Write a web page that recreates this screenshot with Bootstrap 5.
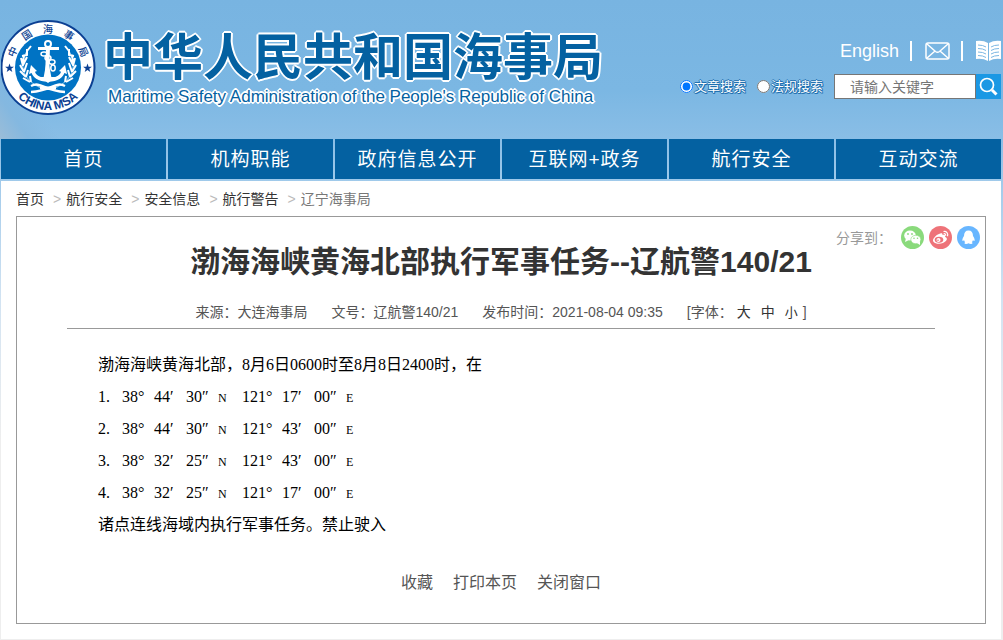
<!DOCTYPE html>
<html lang="zh-CN">
<head>
<meta charset="utf-8">
<meta name="viewport" content="width=device-width, initial-scale=1">
<title>中华人民共和国海事局</title>
<link href="https://cdn.jsdelivr.net/npm/bootstrap@5.3.0/dist/css/bootstrap.min.css" rel="stylesheet">
<style>
  body { font-family: "Liberation Sans", "Noto Sans CJK SC", sans-serif; font-size: 14px; line-height: 20px; color: #333;
    background: #eee linear-gradient(#78b4e1 0, #7bb7e3 90px, #8abee6 140px, #a5cceb 190px, #d2e3f2 300px, #eee 440px) no-repeat; }
  a { color: inherit; text-decoration: none; }
  a:hover { text-decoration: underline; }
  .masthead { min-height: 139px; padding: 20px 2px 0 1px; background: linear-gradient(55deg, #9bbdd8 0, #84b8e0 24px, transparent 50px); }
  .brand-text { margin-left: 10px; padding-top: 8px; }
  .brand-name { font-size: 50px; line-height: 60px; font-weight: 700; color: #0461a1; white-space: nowrap; margin-left: -4px;
    text-shadow: 2px 0 #fff, -2px 0 #fff, 0 2px #fff, 0 -2px #fff, 1px 1px #fff, -1px 1px #fff, 1px -1px #fff, -1px -1px #fff; }
  .brand-en { font-size: 17px; line-height: 18px; color: #0461a1; white-space: nowrap; padding-left: 1px;
    text-shadow: 1px 0 #fff, -1px 0 #fff, 0 1px #fff, 0 -1px #fff, 1px 1px #fff, -1px 1px #fff, 1px -1px #fff, -1px -1px #fff, 2px 0 #fff, -2px 0 #fff, 0 2px #fff, 0 -2px #fff; }
  .tools { gap: 11px; font-size: 18px; line-height: 22px; color: #fff; margin-top: 20px; }
  .tools svg { margin-left: 2px; }
  .rule { width: 2px; height: 20px; background: #fff; }
  .search-kind { font-size: 13px; color: #fff; text-shadow: 1px 0 #1f70b0, -1px 0 #1f70b0, 0 1px #1f70b0, 0 -1px #1f70b0, 1px 1px #1f70b0; }
  .search-kind input { width: 13px; height: 13px; margin: 0 1px 0 0; }
  .search-kind label { margin-right: 11px; }
  .search-box { width: 142px; height: 25px; border: 1px solid #767676; border-radius: 0; padding: 0 15px; font-size: 14px; background: #fff; }
  .search-box::placeholder { color: #757575; }
  .search-go { width: 25px; height: 25px; border: 0; padding: 0; background: #1b98e4; }
  .site-nav { gap: 2px; margin: 0 2px 2px 1px; }
  .site-nav a { flex: 1 1 0; background: #0461a1; color: #fff; font-size: 19px; line-height: 38px; padding-top: 2px; text-align: center; letter-spacing: 1px; }
  .page-body { margin: 0 2px 2px 1px; background: #fff; padding: 9px 15px 15px; }
  .crumbs { --bs-breadcrumb-divider: ">"; margin: 0 0 7px; line-height: 19px; }
  .crumbs .breadcrumb-item + .breadcrumb-item { padding-left: 9px; }
  .crumbs .breadcrumb-item + .breadcrumb-item::before { color: #bbb; padding-right: 5px; font-size: 14px; }
  .crumbs .active { color: #777; }
  .notice { border: 1px solid #999; min-height: 407px; }
  .share { position: absolute; top: 9px; right: 5px; gap: 5px; color: #999; }
  .notice h1 { font-size: 30px; line-height: 40px; font-weight: 700; padding-top: 25px; margin: 0; text-align: center; }
  .facts { margin: 20px 50px 0; border-bottom: 1px solid #999; padding-bottom: 5px; color: #555; gap: 24px; }
  .facts button { border: 0; background: none; padding: 0; color: #333; margin-right: 10px; font-size: 14px; }
  .facts button:last-of-type { margin-right: 5px; font-size: 13px; }
  .notice-text { margin: 20px 50px 0; padding-left: 31px; font: 16px/32px "Liberation Serif", "Noto Sans CJK SC", serif; color: #000; }
  .notice-text p { margin: 0; height: 2em; white-space: pre; }
  .notice-text i { display: inline-block; width: 16px; font-style: normal; }
  .notice-text b { display: inline-block; width: 8px; font-weight: 400; font-size: 12px; }
  .notice-text b.dot { width: 16px; font-size: 16px; }
  .actions { margin: 32px 0 30px; gap: 20px; font-size: 16px; line-height: 20px; color: #555; }
  .actions button { border: 0; background: none; padding: 0; color: inherit; }
</style>
</head>
<body>
<header class="masthead d-flex align-items-start">
  <a href="#" class="d-flex align-items-start text-decoration-none">
    <svg width="96" height="96" viewBox="0 0 96 96" role="img" aria-label="中国海事局">
      <circle cx="47" cy="47.5" r="46.5" fill="#fff" stroke="#0b3f92" stroke-width="2"/>
      <circle cx="47" cy="47.5" r="33" fill="#0073c4"/>
      <g font-family="Noto Sans CJK SC" font-size="10" font-weight="500" fill="#0b3f92" text-anchor="middle">
        <text transform="rotate(-66 47 47.5)" x="47" y="12.500">中</text>
        <text transform="rotate(-33 47 47.5)" x="47" y="12.500">国</text>
        <text x="47" y="12.500">海</text>
        <text transform="rotate(33 47 47.5)" x="47" y="12.500">事</text>
        <text transform="rotate(66 47 47.5)" x="47" y="12.500">局</text>
      </g>
      <path id="ring" d="M4.500 47.500a42.500 42.500 0 0 0 85 0" fill="none"/>
      <text font-family="Liberation Sans" font-size="12" font-weight="700" fill="#0b3f92" text-anchor="middle"><textPath href="#ring" startOffset="50%">CHINA MSA</textPath></text>
      <path id="star" fill="#0b3f92" d="M8.500 43.500l1.100 3.200h3.300l-2.600 2 1 3.200-2.800-1.900-2.800 1.900 1-3.200-2.600-2h3.300z"/>
      <use href="#star" x="78"/>
      <g fill="none" stroke="#fff">
        <circle cx="47" cy="24" r="3" stroke-width="2"/>
        <path d="M37 28.500h21" stroke-width="3"/>
        <path d="M47 27l-1 32" stroke-width="4"/>
        <path d="M45.500 42l-3 16h8l-3-16z" fill="#fff" stroke="none"/>
        <path d="M32 50c0 6 6 10 15 10s15-4 15-10" stroke-width="3.500"/>
        <path d="M28 54l2-9 6 6zM66 54l-2-9-6 6z" fill="#fff" stroke="none"/>
        <path d="M39 57l8 6 8-6z" fill="#fff" stroke="none"/>
        <g stroke-width="1.500"><ellipse cx="43" cy="34" rx="3" ry="2"/><ellipse cx="47" cy="38" rx="3" ry="2.200"/><ellipse cx="51" cy="42" rx="3" ry="2.200"/><ellipse cx="52" cy="48" rx="2.200" ry="3"/></g>
        <g id="laurel">
          <path d="M29 27c-13 15-8 33 11 41" stroke-width="1" stroke="#9dd0f0"/>
          <path d="M30 26l-4 5M26 29v6l-5 1M23 35l-1 7M20 38l2 8M26 37l-4 8M19 45l4 7M26 43l-3 9M19 51l6 6M27 50l-2 7M22 58l7 4M29 56l1 6" stroke-width="2"/>
        </g>
        <use href="#laurel" transform="matrix(-1 0 0 1 94 0)"/>
        <path d="M30 66c10-5 13 5 34 6M64 66c-10-5-13 5-34 6" stroke-width="2.500"/>
        <path d="M39 68h16" stroke-width="3"/>
      </g>
    </svg>
    <span class="brand-text d-flex flex-column">
      <span class="brand-name">中华人民共和国海事局</span>
      <span class="brand-en">Maritime Safety Administration of the People's Republic of China</span>
    </span>
  </a>
  <div class="ms-auto">
    <div class="tools d-flex align-items-center justify-content-end">
      <a href="#">English</a><span class="rule"></span>
      <a href="#" class="d-flex" aria-label="邮箱"><svg width="25" height="18" viewBox="0 0 25 18" fill="none" stroke="#fff" stroke-width="1.500"><rect x="1" y="1" width="23" height="16" rx="2"/><path d="M2 2l8.500 7.500q2 1.500 4 0L23 2M2 16l8-7M23 16l-8-7"/></svg></a>
      <span class="rule"></span>
      <a href="#" class="d-flex" aria-label="阅读"><svg width="25" height="22" viewBox="0 0 25 22"><path fill="#fff" d="M0 1q7-1 12 2v18q-5-3-12-2zM25 1q-7-1-12 2v18q5-3 12-2z"/><path fill="none" stroke="#7bb7e3" stroke-width="1" d="M2 5q5 0 8 2M2 8.500q5 0 8 2M2 12q5 0 8 2M2 15.500q5 0 8 2M23 5q-5 0-8 2M23 8.500q-5 0-8 2M23 12q-5 0-8 2M23 15.500q-5 0-8 2"/></svg></a>
    </div>
    <form class="d-flex align-items-center justify-content-end mt-2 pt-1" onsubmit="return false">
      <div class="search-kind d-flex">
        <label class="d-flex align-items-center" for="kind-article"><input type="radio" name="kind" id="kind-article" checked>文章搜索</label>
        <label class="d-flex align-items-center" for="kind-law"><input type="radio" name="kind" id="kind-law">法规搜索</label>
      </div>
      <input class="search-box" type="text" placeholder="请输入关键字" aria-label="请输入关键字">
      <button class="search-go d-flex align-items-center justify-content-center" type="submit" aria-label="搜索"><svg width="19" height="19" viewBox="0 0 19 19" fill="none" stroke="#fff"><circle cx="8" cy="8" r="6.500" stroke-width="1.700"/><path d="M13 13l4.500 4.500" stroke-width="3"/></svg></button>
    </form>
  </div>
</header>
<nav class="site-nav d-flex">
  <a href="#">首页</a><a href="#">机构职能</a><a href="#">政府信息公开</a><a href="#">互联网+政务</a><a href="#">航行安全</a><a href="#">互动交流</a>
</nav>
<main class="page-body">
  <nav aria-label="breadcrumb">
    <ol class="breadcrumb crumbs">
      <li class="breadcrumb-item"><a href="#">首页</a></li>
      <li class="breadcrumb-item"><a href="#">航行安全</a></li>
      <li class="breadcrumb-item"><a href="#">安全信息</a></li>
      <li class="breadcrumb-item"><a href="#">航行警告</a></li>
      <li class="breadcrumb-item active" aria-current="page">辽宁海事局</li>
    </ol>
  </nav>
  <article class="notice position-relative">
    <div class="share d-flex align-items-center">
      <span class="me-1">分享到：</span>
      <a href="#" class="d-flex" aria-label="微信"><svg width="23" height="23" viewBox="0 0 23 23"><circle cx="11.500" cy="11.500" r="11.500" fill="#8ada7c"/><ellipse cx="9" cy="9.500" rx="5.800" ry="4.900" fill="#fff"/><path d="M5 12l-1 4 4-2z" fill="#fff"/><ellipse cx="14.800" cy="13.500" rx="5" ry="4.200" fill="#fff" stroke="#8ada7c" stroke-width=".6"/><path d="M16 17l3 2v-4z" fill="#fff"/><g fill="#8ada7c"><circle cx="7" cy="8" r=".9"/><circle cx="11" cy="8" r=".9"/><circle cx="13" cy="12.300" r=".8"/><circle cx="16.500" cy="12.300" r=".8"/></g></svg></a>
      <a href="#" class="d-flex" aria-label="微博"><svg width="23" height="23" viewBox="0 0 23 23"><circle cx="11.500" cy="11.500" r="11.500" fill="#ee7379"/><path d="M10 8c2-1.500 4-1 3.500 1 2-.8 3.500 0 2.500 1.800 5 2-.5 7-6 7C5 17.800 2.500 15 5 12c1.500-2 3.500-3.700 5-4z" fill="#fff"/><ellipse cx="10" cy="13.700" rx="4.300" ry="3" fill="#ee7379"/><circle cx="9.500" cy="14" r="2" fill="#fff"/><circle cx="9" cy="14.200" r=".8" fill="#ee7379"/><path d="M14.500 5.500c3-.5 5 2 4 4.800M14.700 7.700c1.500-.2 2.300.8 1.900 2.100" fill="none" stroke="#fff" stroke-width="1.200"/></svg></a>
      <a href="#" class="d-flex" aria-label="QQ"><svg width="23" height="23" viewBox="0 0 23 23"><circle cx="11.500" cy="11.500" r="11.500" fill="#68b6ff"/><path d="M11.500 4.500c3 0 4.500 2 4.500 5.500 1.500 2 2 4 1.400 5-.5.300-1-.3-1.400-1-.2 1-.6 1.800-1.200 2.300 1.500.7.800 1.700-.8 1.700-1 0-1.900-.3-2.500-.8-.6.500-1.500.8-2.500.8-1.600 0-2.300-1-.8-1.700C7.600 15.800 7.200 15 7 14c-.4.700-.9 1.300-1.400 1-.6-1-.1-3 1.400-5 0-3.500 1.500-5.500 4.500-5.500z" fill="#fff"/></svg></a>
    </div>
    <h1>渤海海峡黄海北部执行军事任务--辽航警140/21</h1>
    <div class="facts d-flex justify-content-center">
      <span>来源：大连海事局</span><span>文号：辽航警140/21</span><span>发布时间：2021-08-04 09:35</span>
      <span>[字体： <button type="button">大</button><button type="button">中</button><button type="button">小</button>]</span>
    </div>
    <div class="notice-text">
      <p>渤海海峡黄海北部，8月6日0600时至8月8日2400时，在</p>
      <p>1<b class="dot">.</b>38<i>°</i>44<i>′</i>30<i>″</i><b>N</b><i></i>121<i>°</i>17<i>′</i>00<i>″</i><b>E</b></p>
      <p>2<b class="dot">.</b>38<i>°</i>44<i>′</i>30<i>″</i><b>N</b><i></i>121<i>°</i>43<i>′</i>00<i>″</i><b>E</b></p>
      <p>3<b class="dot">.</b>38<i>°</i>32<i>′</i>25<i>″</i><b>N</b><i></i>121<i>°</i>43<i>′</i>00<i>″</i><b>E</b></p>
      <p>4<b class="dot">.</b>38<i>°</i>32<i>′</i>25<i>″</i><b>N</b><i></i>121<i>°</i>17<i>′</i>00<i>″</i><b>E</b></p>
      <p>诸点连线海域内执行军事任务。禁止驶入</p>
    </div>
    <div class="actions d-flex justify-content-center">
      <button type="button">收藏</button><button type="button">打印本页</button><button type="button">关闭窗口</button>
    </div>
  </article>
</main>
<script src="https://cdn.jsdelivr.net/npm/bootstrap@5.3.0/dist/js/bootstrap.bundle.min.js"></script>
</body>
</html>
